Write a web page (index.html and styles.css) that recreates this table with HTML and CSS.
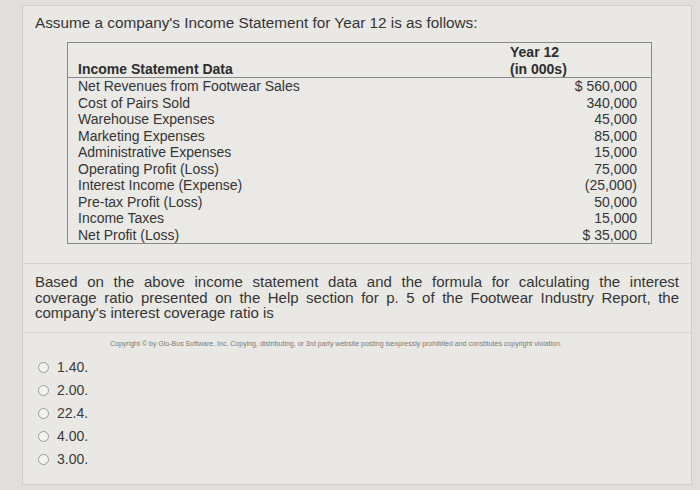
FILE: index.html
```html
<!DOCTYPE html>
<html>
<head>
<meta charset="utf-8">
<link rel="stylesheet" href="styles.css">
</head>
<body>
<div class="panel">
  <section class="data">
    <p class="title">Assume a company's Income Statement for Year 12 is as follows:</p>
    <table class="stmt">
      <thead>
        <tr>
          <th class="label-head">Income Statement Data</th>
          <th class="year-head">Year 12<br>(in 000s)</th>
        </tr>
      </thead>
      <tbody>
        <tr><td>Net Revenues from Footwear Sales</td><td class="num">$ 560,000</td></tr>
        <tr><td>Cost of Pairs Sold</td><td class="num">340,000</td></tr>
        <tr><td>Warehouse Expenses</td><td class="num">45,000</td></tr>
        <tr><td>Marketing Expenses</td><td class="num">85,000</td></tr>
        <tr><td>Administrative Expenses</td><td class="num">15,000</td></tr>
        <tr><td>Operating Profit (Loss)</td><td class="num">75,000</td></tr>
        <tr><td>Interest Income (Expense)</td><td class="num">(25,000)</td></tr>
        <tr><td>Pre-tax Profit (Loss)</td><td class="num">50,000</td></tr>
        <tr><td>Income Taxes</td><td class="num">15,000</td></tr>
        <tr><td>Net Profit (Loss)</td><td class="num">$ 35,000</td></tr>
      </tbody>
    </table>
  </section>
  <section class="question">
    <span class="qline">Based on the above income statement data and the formula for calculating the interest</span>
    <span class="qline">coverage ratio presented on the Help section for p. 5 of the Footwear Industry Report, the</span>
    <span class="qline last">company's interest coverage ratio is</span>
  </section>
  <section class="answers">
    <p class="copyright">Copyright © by Glo-Bus Software, Inc. Copying, distributing, or 3rd party website posting isexpressly prohibited and constitutes copyright violation.</p>
    <ul class="options">
      <li><span class="radio"></span>1.40.</li>
      <li><span class="radio"></span>2.00.</li>
      <li><span class="radio"></span>22.4.</li>
      <li><span class="radio"></span>4.00.</li>
      <li><span class="radio"></span>3.00.</li>
    </ul>
  </section>
</div>
</body>
</html>
```

FILE: styles.css
```css
html, body {
  margin: 0;
  padding: 0;
}
body {
  background: #e0dfdc;
  font-family: "Liberation Sans", Arial, sans-serif;
  color: #353535;
  padding-top: 5px;
  height: 490px;
  box-sizing: border-box;
  overflow: hidden;
}
.panel {
  margin-left: 22px;
  width: 668px;
  border: 1px solid #cfcecb;
  background: #e9e8e4;
}
.data {
  padding: 8px 0 19px 0;
}
.title {
  margin: 0;
  padding-left: 12px;
  font-size: 15.3px;
  line-height: 18px;
}
.stmt {
  margin: 10px 0 0 44px;
  width: 585px;
  border-collapse: collapse;
  border: 1px solid #8a8a8a;
  font-size: 14px;
  line-height: 16.5px;
  background: #eae9e6;
}
.stmt th {
  padding: 1px 0 0 0;
  text-align: left;
  font-weight: bold;
  border-bottom: 1px solid #8a8a8a;
  color: #2e2e2e;
}
.stmt .label-head {
  vertical-align: bottom;
  padding-left: 10px;
  padding-top: 0;
}
.stmt .year-head {
  width: 141px;
  padding-left: 1px;
}
.stmt td {
  padding: 0 0 0 10px;
}
.stmt td.num {
  text-align: right;
  padding: 0 14px 0 0;
}
.question {
  border-top: 1px solid #d3d2ce;
  padding: 10px 12px 11px 12px;
  font-size: 15px;
  line-height: 15.5px;
}
.qline {
  display: block;
  text-align: justify;
  text-align-last: justify;
}
.qline.last {
  text-align-last: left;
}
.answers {
  border-top: 1px solid #d3d2ce;
  padding: 6px 0 13px 0;
}
.copyright {
  margin: 0 0 7px 87px;
  font-size: 7px;
  line-height: 10px;
  color: #7a7a7a;
  white-space: nowrap;
}
.options {
  list-style: none;
  margin: 0;
  padding: 0 0 0 15px;
}
.options li {
  display: flex;
  align-items: center;
  height: 23px;
  font-size: 14px;
  color: #3a3a3a;
}
.options li:first-child {
  margin-top: 1px;
}
.radio {
  width: 11px;
  height: 11px;
  box-sizing: border-box;
  border: 1px solid #9b9b9b;
  border-radius: 50%;
  background: #f3f2ef;
  margin-right: 8px;
  flex: none;
}
```
